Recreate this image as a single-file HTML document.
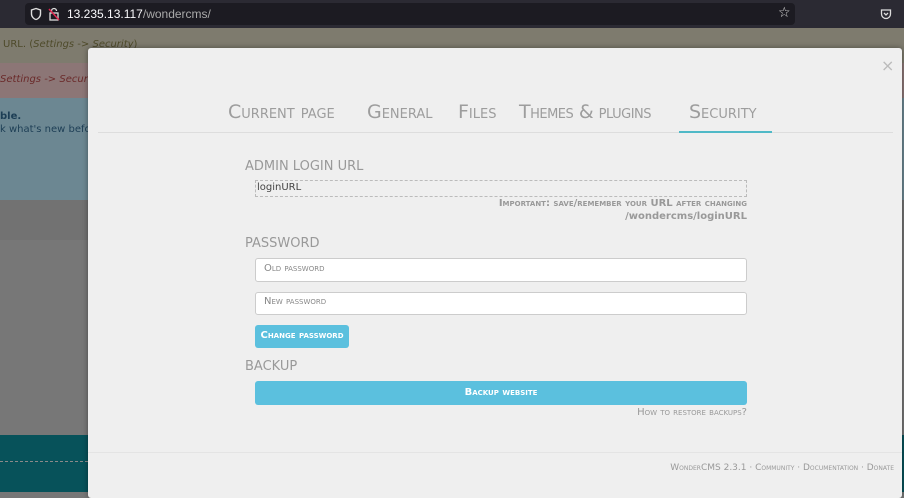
<!DOCTYPE html>
<html><head><style>
*{margin:0;padding:0;box-sizing:border-box}
body{width:904px;height:492px;overflow:hidden;position:relative;font-family:"DejaVu Sans","Liberation Sans",sans-serif;background:#777}
.abs{position:absolute}
.sc{font-variant:small-caps}
</style></head><body>
<div class="abs" style="left:0;top:0;width:904px;height:28px;background:#2b2a33"></div>
<div class="abs" style="left:25px;top:3px;width:770px;height:22px;background:#1c1b22;border-radius:4px"></div>
<svg class="abs" style="left:29px;top:7px" width="14" height="14" viewBox="0 0 14 14"><path d="M7 1.5L2.5 3v4c0 3 2.5 5 4.5 5.5 2-.5 4.5-2.5 4.5-5.5V3z" fill="none" stroke="#ddd" stroke-width="1.4"/></svg>
<svg class="abs" style="left:48px;top:7px" width="12" height="14" viewBox="0 0 12 14"><rect x="2" y="6" width="8" height="7" fill="none" stroke="#ddd" stroke-width="1.3"/><path d="M3.5 6V4a2.5 2.5 0 0 1 5 0" fill="none" stroke="#ddd" stroke-width="1.3"/><path d="M1 2L11 13" stroke="#e22850" stroke-width="1.5"/></svg>
<div class="abs" style="left:67px;top:7px;font-size:12px;color:#fbfbfe;font-family:'Liberation Sans',sans-serif">13.235.13.117<span style="color:#aaa">/wondercms/</span></div>
<div class="abs" style="left:778px;top:5px;color:#ddd;font-size:14px">☆</div>
<svg class="abs" style="left:880px;top:8px" width="12" height="12" viewBox="0 0 12 12"><path d="M1.5 2h9v4a4.5 4.5 0 0 1-9 0z" fill="none" stroke="#ddd" stroke-width="1.3"/><path d="M4 5l2 2 2-2" fill="none" stroke="#ddd" stroke-width="1.3"/></svg>

<div class="abs" style="left:0;top:28px;width:904px;height:35px;background:#7e7b6e"></div>
<div class="abs" style="left:3px;top:39px;font-size:10px;color:#4e4a2a">URL. (<i>Settings -&gt; Security</i>)</div>
<div class="abs" style="left:0;top:63px;width:904px;height:35px;background:#8c7676"></div>
<div class="abs" style="left:0;top:74px;font-size:10px;color:#6a2a2a"><i>Settings -&gt; Security</i></div>
<div class="abs" style="left:0;top:98px;width:904px;height:102px;background:#6c8792"></div>
<div class="abs" style="left:0;top:111px;font-size:10px;color:#1d3e55;font-weight:bold">ble.</div>
<div class="abs" style="left:0;top:124px;font-size:10px;color:#1d3e55">k what's new befor</div>
<div class="abs" style="left:0;top:200px;width:904px;height:40px;background:#727272"></div>
<div class="abs" style="left:0;top:435px;width:904px;height:57px;background:#07525a"></div>
<div class="abs" style="left:0;top:461px;width:88px;border-top:1px dashed #8a8a8a"></div>

<div class="abs" style="left:88px;top:48px;width:814px;height:450px;background:#efefef;border-radius:3px;box-shadow:0 0 6px rgba(0,0,0,.4)"></div>
<div class="abs" style="left:881px;top:56px;font-size:16px;color:#bbb">×</div>
<div class="abs sc" style="left:228px;top:101px;font-size:19px;color:#9d9d9d;white-space:nowrap">
<span style="position:absolute;left:0">Current page</span><span style="position:absolute;left:139px">General</span><span style="position:absolute;left:230px">Files</span><span style="position:absolute;left:291px;letter-spacing:-0.5px">Themes &amp; plugins</span><span style="position:absolute;left:461px">Security</span></div>
<div class="abs" style="left:98px;top:132px;width:795px;height:1px;background:#ddd"></div>
<div class="abs" style="left:679px;top:131px;width:93px;height:2px;background:#4fb9c7"></div>

<div class="abs" style="left:245px;top:159px;font-size:13px;color:#999">ADMIN LOGIN URL</div>
<div class="abs" style="left:255px;top:180px;width:492px;height:17px;border:1px dashed #bbb"></div>
<div class="abs" style="left:257px;top:182px;font-size:10px;color:#444">loginURL</div>
<div class="abs sc" style="left:400px;top:198px;width:347px;text-align:right;font-size:10px;color:#999;font-weight:bold">Important: save/remember your URL after changing</div>
<div class="abs" style="left:400px;top:211px;width:347px;text-align:right;font-size:10px;color:#999;font-weight:bold">/wondercms/loginURL</div>
<div class="abs" style="left:245px;top:236px;font-size:13px;color:#999">PASSWORD</div>
<div class="abs" style="left:255px;top:258px;width:492px;height:24px;background:#fff;border:1px solid #ccc;border-radius:3px"></div>
<div class="abs sc" style="left:264px;top:263px;font-size:10px;color:#888">Old password</div>
<div class="abs" style="left:255px;top:292px;width:492px;height:23px;background:#fff;border:1px solid #ccc;border-radius:3px"></div>
<div class="abs sc" style="left:264px;top:296px;font-size:10px;color:#888">New password</div>
<div class="abs sc" style="left:255px;top:325px;width:94px;height:23px;background:#5bc0de;border-radius:3px;color:#fff;font-size:10px;font-weight:bold;text-align:center;line-height:22px">Change password</div>
<div class="abs" style="left:245px;top:359px;font-size:13px;color:#999">BACKUP</div>
<div class="abs sc" style="left:255px;top:381px;width:492px;height:24px;background:#5bc0de;border-radius:3px;color:#fff;font-size:10px;font-weight:bold;text-align:center;line-height:23px">Backup website</div>
<div class="abs sc" style="left:500px;top:407px;width:247px;text-align:right;font-size:10px;color:#999">How to restore backups?</div>
<div class="abs" style="left:88px;top:452px;width:814px;height:1px;background:#e4e4e4"></div>
<div class="abs sc" style="left:500px;top:463px;width:394px;text-align:right;font-size:9px;color:#999">WonderCMS 2.3.1 · Community · Documentation · Donate</div>
</body></html>
